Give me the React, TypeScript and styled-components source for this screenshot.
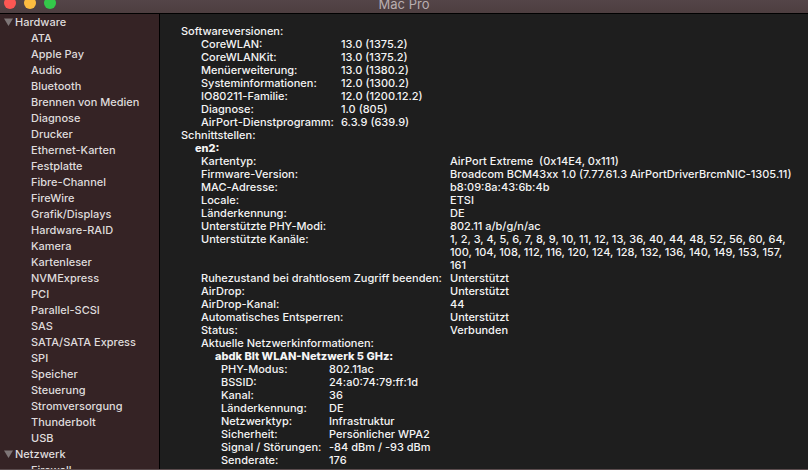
import React from "react";
import styled, { createGlobalStyle } from "styled-components";

const GlobalStyle = createGlobalStyle`
  * { box-sizing: border-box; }
  body {
    margin: 0;
    background: #1e1e1e;
    font-family: Inter, "Liberation Sans", sans-serif;
    font-size: 11px;
    font-weight: 500;
  }
`;

const Window = styled.div`
  display: flex;
  flex-direction: column;
  height: 100vh;
  overflow: hidden;
  border-bottom: 1px solid #5b4c4e;
`;

const TitleBar = styled.header`
  display: grid;
  grid-template-columns: 1fr auto 1fr;
  grid-template-rows: 100%;
  align-items: end;
  flex: none;
  height: 14px;
  overflow: hidden;
  background: linear-gradient(#544548, #4d3e40);
  border-bottom: 1px solid #000;
`;

const Lights = styled.div`
  display: flex;
  gap: 8px;
  padding: 0 4px 4px;
`;

const Light = styled.button<{ $color: string }>`
  width: 12px;
  height: 12px;
  padding: 0;
  border: 0;
  border-radius: 50%;
  background: ${(p) => p.$color};
`;

const Title = styled.h1`
  margin: 0;
  color: #b9aeb0;
  font-size: 13px;
  font-weight: 400;
  line-height: 18px;
`;

const Body = styled.div`
  display: flex;
  flex: 1;
  min-height: 0;
`;

const Sidebar = styled.nav`
  flex: none;
  width: 160px;
  overflow: hidden;
  background: #352325;
  border-right: 1px solid #000;
  color: #dfdbdc;
  line-height: 16px;
`;

const GroupButton = styled.button`
  display: flex;
  align-items: center;
  gap: 2px;
  width: 100%;
  padding: 0 4px;
  border: 0;
  background: none;
  color: inherit;
  font: inherit;
`;

const Triangle = styled.svg`
  width: 9px;
  height: 8px;
  fill: #7e7677;
`;

const List = styled.ul`
  margin: 0;
  padding: 0;
  list-style: none;
`;

const ItemLink = styled.a`
  display: block;
  padding-left: 31px;
  color: inherit;
  text-decoration: none;
`;

const Content = styled.main`
  flex: 1;
  min-width: 0;
  overflow: hidden;
  padding: 11px 8px 0 21px;
  color: #f4f4f4;
  line-height: 13px;
`;

const Heading = styled.h2<{ $indent: number; $bold?: boolean }>`
  margin: 0;
  padding-left: ${(p) => p.$indent}px;
  font-size: 11px;
  font-weight: ${(p) => (p.$bold ? 800 : 500)};
`;

const Details = styled.dl<{ $indent: number; $label: number }>`
  display: grid;
  grid-template-columns: ${(p) => p.$label}px 1fr;
  margin: 0;
  padding-left: ${(p) => p.$indent}px;
`;

const Label = styled.dt`
  white-space: nowrap;
`;

const Value = styled.dd`
  margin: 0;
  white-space: pre-wrap;
`;

type Pair = [string, string];

const groups = [
  {
    name: "Hardware",
    items: [
      "ATA", "Apple Pay", "Audio", "Bluetooth", "Brennen von Medien", "Diagnose", "Drucker",
      "Ethernet-Karten", "Festplatte", "Fibre-Channel", "FireWire", "Grafik/Displays",
      "Hardware-RAID", "Kamera", "Kartenleser", "NVMExpress", "PCI", "Parallel-SCSI", "SAS",
      "SATA/SATA Express", "SPI", "Speicher", "Steuerung", "Stromversorgung", "Thunderbolt", "USB",
    ],
  },
  { name: "Netzwerk", items: ["Firewall"] },
];

const software: Pair[] = [
  ["CoreWLAN:", "13.0 (1375.2)"],
  ["CoreWLANKit:", "13.0 (1375.2)"],
  ["Menüerweiterung:", "13.0 (1380.2)"],
  ["Systeminformationen:", "12.0 (1300.2)"],
  ["IO80211-Familie:", "12.0 (1200.12.2)"],
  ["Diagnose:", "1.0 (805)"],
  ["AirPort-Dienstprogramm:", "6.3.9 (639.9)"],
];

const card: Pair[] = [
  ["Kartentyp:", "AirPort Extreme  (0x14E4, 0x111)"],
  ["Firmware-Version:", "Broadcom BCM43xx 1.0 (7.77.61.3 AirPortDriverBrcmNIC-1305.11)"],
  ["MAC-Adresse:", "b8:09:8a:43:6b:4b"],
  ["Locale:", "ETSI"],
  ["Länderkennung:", "DE"],
  ["Unterstützte PHY-Modi:", "802.11 a/b/g/n/ac"],
  [
    "Unterstützte Kanäle:",
    "1, 2, 3, 4, 5, 6, 7, 8, 9, 10, 11, 12, 13, 36, 40, 44, 48, 52, 56, 60, 64, 100, 104, 108, 112, 116, 120, 124, 128, 132, 136, 140, 149, 153, 157, 161",
  ],
  ["Ruhezustand bei drahtlosem Zugriff beenden:", "Unterstützt"],
  ["AirDrop:", "Unterstützt"],
  ["AirDrop-Kanal:", "44"],
  ["Automatisches Entsperren:", "Unterstützt"],
  ["Status:", "Verbunden"],
];

const network: Pair[] = [
  ["PHY-Modus:", "802.11ac"],
  ["BSSID:", "24:a0:74:79:ff:1d"],
  ["Kanal:", "36"],
  ["Länderkennung:", "DE"],
  ["Netzwerktyp:", "Infrastruktur"],
  ["Sicherheit:", "Persönlicher WPA2"],
  ["Signal / Störungen:", "-84 dBm / -93 dBm"],
  ["Senderate:", "176"],
];

function DetailList({ rows, indent, label }: { rows: Pair[]; indent: number; label: number }) {
  return (
    <Details $indent={indent} $label={label}>
      {rows.map(([name, value]) => (
        <React.Fragment key={name}>
          <Label>{name}</Label>
          <Value>{value}</Value>
        </React.Fragment>
      ))}
    </Details>
  );
}

export default function App() {
  return (
    <>
      <GlobalStyle />
      <Window>
        <TitleBar>
          <Lights>
            <Light $color="#fc5753" aria-label="Schließen" />
            <Light $color="#fdbc40" aria-label="Minimieren" />
            <Light $color="#34c84a" aria-label="Zoomen" />
          </Lights>
          <Title>Mac Pro</Title>
        </TitleBar>
        <Body>
          <Sidebar>
            {groups.map((group) => (
              <div key={group.name}>
                <GroupButton aria-expanded="true">
                  <Triangle viewBox="0 0 9 8" aria-hidden="true">
                    <path d="M0 0.5h9L4.5 8z" />
                  </Triangle>
                  {group.name}
                </GroupButton>
                <List>
                  {group.items.map((item) => (
                    <li key={item}>
                      <ItemLink href="#">{item}</ItemLink>
                    </li>
                  ))}
                </List>
              </div>
            ))}
          </Sidebar>
          <Content>
            <Heading $indent={0}>Softwareversionen:</Heading>
            <DetailList rows={software} indent={20} label={140} />
            <Heading $indent={0}>Schnittstellen:</Heading>
            <Heading $indent={14} $bold>en2:</Heading>
            <DetailList rows={card} indent={20} label={249} />
            <Heading $indent={20}>Aktuelle Netzwerkinformationen:</Heading>
            <Heading $indent={34} $bold>abdk Blt WLAN-Netzwerk 5 GHz:</Heading>
            <DetailList rows={network} indent={40} label={108} />
          </Content>
        </Body>
      </Window>
    </>
  );
}
